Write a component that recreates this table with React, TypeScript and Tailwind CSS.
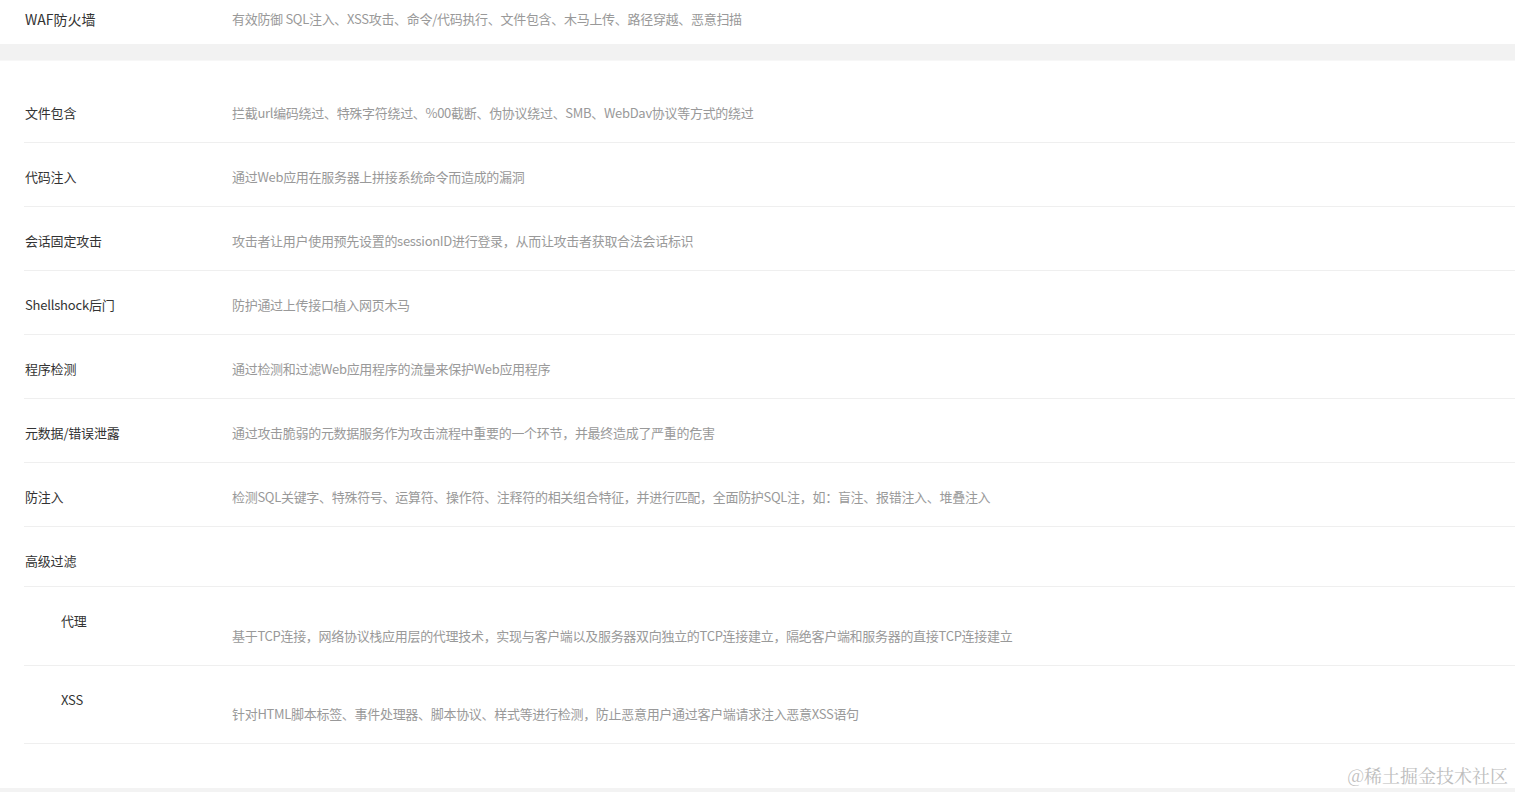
import React from "react";

const font = { fontFamily: '"Microsoft YaHei", "Noto Sans CJK SC", "Noto Sans", sans-serif' };

type Row = { label: string; desc: string };

const rows: Row[] = [
  { label: "文件包含", desc: "拦截url编码绕过、特殊字符绕过、%00截断、伪协议绕过、SMB、WebDav协议等方式的绕过" },
  { label: "代码注入", desc: "通过Web应用在服务器上拼接系统命令而造成的漏洞" },
  { label: "会话固定攻击", desc: "攻击者让用户使用预先设置的sessionID进行登录，从而让攻击者获取合法会话标识" },
  { label: "Shellshock后门", desc: "防护通过上传接口植入网页木马" },
  { label: "程序检测", desc: "通过检测和过滤Web应用程序的流量来保护Web应用程序" },
  { label: "元数据/错误泄露", desc: "通过攻击脆弱的元数据服务作为攻击流程中重要的一个环节，并最终造成了严重的危害" },
  { label: "防注入", desc: "检测SQL关键字、特殊符号、运算符、操作符、注释符的相关组合特征，并进行匹配，全面防护SQL注，如：盲注、报错注入、堆叠注入" },
];

const labelCls = "w-[207px] text-[13px] leading-[20px] text-[#333] tracking-[-0.2px]";
const descCls = "text-[13px] leading-[20px] text-[#999] tracking-[-0.3px]";

export default function App() {
  return (
    <div className="relative w-[1515px] h-[792px] bg-white overflow-hidden" style={font}>
      {/* top row */}
      <div className="flex items-start h-[44px] pt-[9px] pl-[25px]">
        <div className="w-[207px] text-[14px] leading-[20px] text-[#333]">WAF防火墙</div>
        <div className={descCls}>有效防御 SQL注入、XSS攻击、命令/代码执行、文件包含、木马上传、路径穿越、恶意扫描</div>
      </div>
      <div className="h-[17px] bg-[#f2f2f2] border-b border-[#f7f7f7]" />

      <div className="pt-[18px] pl-[24px]">
        {rows.map((r) => (
          <div key={r.label} className="flex items-start pt-[24px] pb-[19px] pl-[1px] border-b border-[#efefef]">
            <div className={labelCls}>{r.label}</div>
            <div className={descCls}>{r.desc}</div>
          </div>
        ))}
        <div className="flex items-start pt-[24px] pb-[15px] pl-[1px] border-b border-[#efefef]">
          <div className={labelCls}>高级过滤</div>
        </div>
        <div className="flex items-start pb-[19px] pl-[1px] border-b border-[#efefef]">
          <div className={`${labelCls} pt-[24px] pl-[36px]`}>代理</div>
          <div className={`${descCls} pt-[39px]`}>基于TCP连接，网络协议栈应用层的代理技术，实现与客户端以及服务器双向独立的TCP连接建立，隔绝客户端和服务器的直接TCP连接建立</div>
        </div>
        <div className="flex items-start pb-[19px] pl-[1px] border-b border-[#efefef]">
          <div className={`${labelCls} pt-[24px] pl-[36px]`}>XSS</div>
          <div className={`${descCls} pt-[38px]`}>针对HTML脚本标签、事件处理器、脚本协议、样式等进行检测，防止恶意用户通过客户端请求注入恶意XSS语句</div>
        </div>
      </div>

      <div className="absolute left-0 right-0 bottom-0 h-[4px] bg-[#f3f3f3]" />
      <div className="absolute right-[7px] bottom-[5px] text-[18px] leading-[24px] text-[#bdbdbd]" style={{ fontFamily: '"Noto Serif CJK SC", "Noto Sans CJK SC", serif' }}>
        @稀土掘金技术社区
      </div>
    </div>
  );
}
